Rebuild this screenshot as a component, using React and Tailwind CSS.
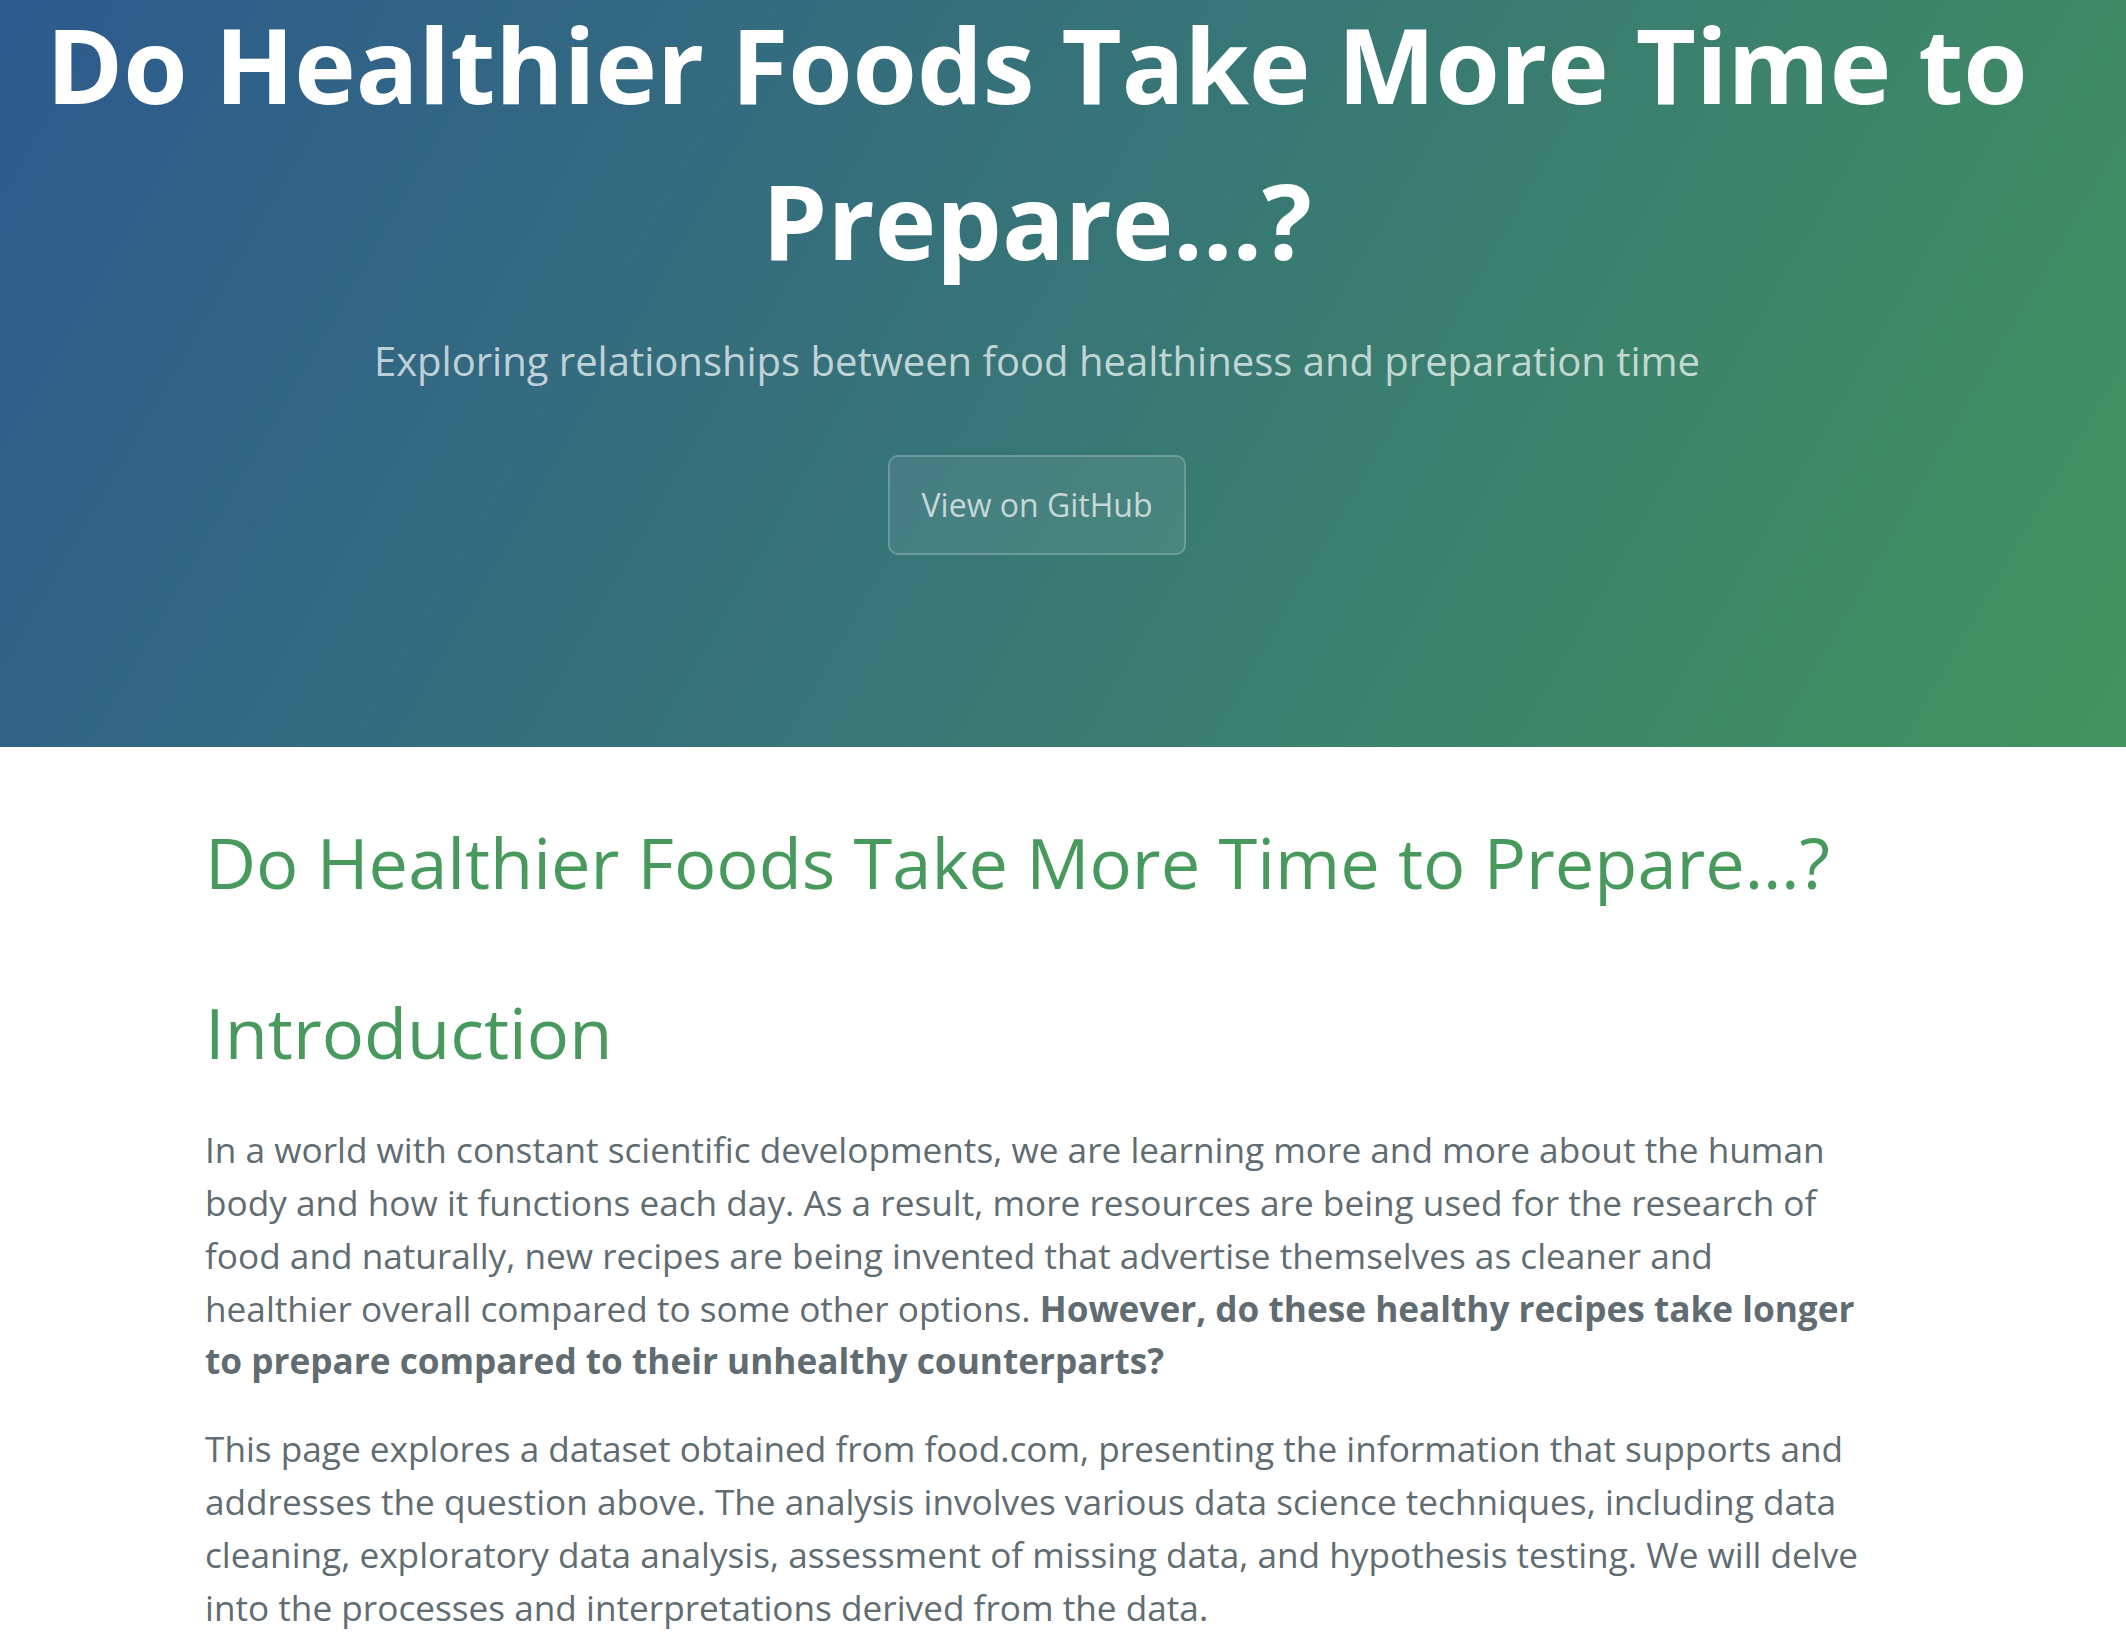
import React from 'react';

const font = { fontFamily: '"Open Sans", "Helvetica Neue", Helvetica, Arial, sans-serif' };

const App = () => {
  return (
    <div className="min-h-[1648px] bg-white text-[#606c71]" style={font}>
      {/* page header */}
      <header className="overflow-hidden bg-[linear-gradient(120deg,#2d5a8e,#42935e)] pl-[22px] pr-[74px] pb-[160px] text-center text-white">
        <h1 className="mt-[-14px] mb-[3px] text-[104px] font-bold leading-[1.5]">
          Do Healthier Foods Take More Time to Prepare…?
        </h1>
        <h2 className="mt-[33px] mb-[64px] text-[40px] font-normal leading-[1.5] text-white/70">
          Exploring relationships between food healthiness and preparation time
        </h2>
        <a
          href="#"
          className="mb-[32px] inline-block rounded-[10px] border-2 border-white/20 bg-white/[0.08] px-[32px] py-[24px] text-[32px] leading-[1.5] text-white/70"
        >
          View on GitHub
        </a>
      </header>

      {/* main content */}
      <main className="pl-[205px] pr-[264px] pt-[63px] text-[35.2px] leading-[1.5]">
        <h1 className="mb-[36px] text-[70.4px] font-normal leading-[1.5] text-[#489a5c]">
          Do Healthier Foods Take More Time to Prepare…?
        </h1>
        <h1 className="mt-[64px] mb-[38px] text-[70.4px] font-normal leading-[1.5] text-[#489a5c]">
          Introduction
        </h1>
        <p className="mb-[35px]">
          In a world with constant scientific developments, we are learning more and more about the human body and how it
          functions each day. As a result, more resources are being used for the research of food and naturally, new
          recipes are being invented that advertise themselves as cleaner and healthier overall compared to some other
          options.{' '}
          <strong className="font-bold">
            However, do these healthy recipes take longer to prepare compared to their unhealthy counterparts?
          </strong>
        </p>
        <p className="mb-[32px]">
          This page explores a dataset obtained from food.com, presenting the information that supports and addresses the
          question above. The analysis involves various data science techniques, including data cleaning, exploratory data
          analysis, assessment of missing data, and hypothesis testing. We will delve into the processes and
          interpretations derived from the data.
        </p>
      </main>
    </div>
  );
};

export default App;
